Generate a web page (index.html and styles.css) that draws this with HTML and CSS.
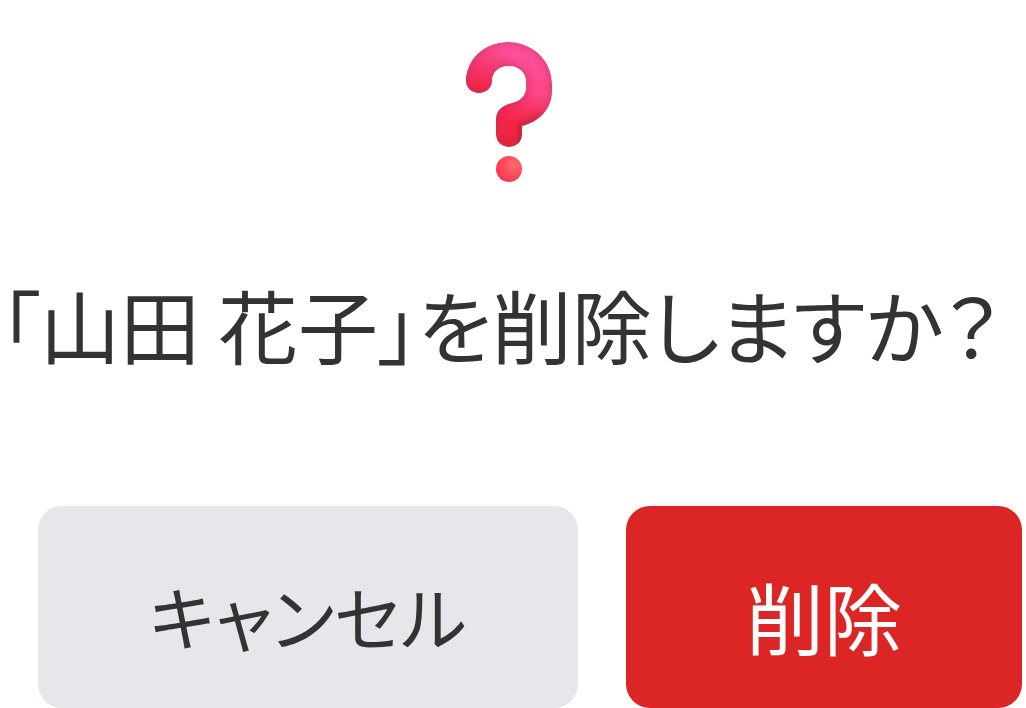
FILE: index.html
```html
<!DOCTYPE html>
<html lang="ja">
<head>
  <meta charset="UTF-8" />
  <meta name="viewport" content="width=device-width, initial-scale=1.0" />
  <title>削除の確認</title>
  <link rel="stylesheet" href="styles.css">
</head>
<body>
  <main class="dialog">
    <svg class="icon" viewBox="0 0 88 144" aria-hidden="true">
      <defs>
        <linearGradient id="base" gradientUnits="userSpaceOnUse" x1="66" y1="14" x2="42" y2="100">
          <stop offset="0" stop-color="#fd509a" />
          <stop offset="0.4" stop-color="#fb4684" />
          <stop offset="0.8" stop-color="#f6213f" />
          <stop offset="1" stop-color="#ea253a" />
        </linearGradient>
        <radialGradient id="leftRed" gradientUnits="userSpaceOnUse" cx="10" cy="56" r="56">
          <stop offset="0" stop-color="#f2203a" />
          <stop offset="0.4" stop-color="#f0264a" stop-opacity="0.7" />
          <stop offset="1" stop-color="#ee2c58" stop-opacity="0" />
        </radialGradient>
        <radialGradient id="dot" cx="0.68" cy="0.35" r="0.7">
          <stop offset="0" stop-color="#ff6a6c" />
          <stop offset="1" stop-color="#fd3550" />
        </radialGradient>
        <filter id="soft" x="-20%" y="-20%" width="140%" height="140%">
          <feGaussianBlur stdDeviation="3" />
        </filter>
        <clipPath id="hook">
          <path id="mark" d="M1 40C1 18 20 1 43 1C67 1 87 19 87 43V51C87 68 74 81 57 85V93C57 101 51 106 44 106C37 106 31 101 31 93V78C31 69 38 64 47 62C55 60 61 55 61 46V41C61 31 53 25 44 25C34 25 27 31 27 40C27 47 21 52 14 52C7 52 1 47 1 40Z" />
        </clipPath>
      </defs>
      <g clip-path="url(#hook)">
        <use href="#mark" fill="url(#base)" />
        <use href="#mark" fill="url(#leftRed)" />
        <use href="#mark" fill="none" stroke="#bd2d59" stroke-width="4" stroke-opacity="0.6" filter="url(#soft)" />
        <path d="M56 108V87C64 85 70 81 75 76" fill="none" stroke="#b6232f" stroke-width="9" stroke-opacity="0.6" filter="url(#soft)" />
      </g>
      <circle cx="44" cy="128" r="13" fill="url(#dot)" />
    </svg>

    <h1 class="message">「山田 花子」を削除しますか？</h1>

    <div class="actions">
      <button type="button" class="btn btn-cancel">キャンセル</button>
      <button type="button" class="btn btn-delete">削除</button>
    </div>
  </main>
</body>
</html>
```
FILE: styles.css
```css
body {
  margin: 0;
  background: white;
  color: #333;
  font-family: "Noto Sans CJK JP", sans-serif;
  font-feature-settings: "palt";
}

.dialog {
  display: flex;
  flex-direction: column;
  padding: 41px 4px 0 0;
}

.icon {
  align-self: center;
  width: 88px;
  height: 144px;
  margin-right: 4px;
}

.message {
  margin: 76px 0 121px;
  font-size: 80px;
  font-weight: 400;
  line-height: 124px;
  white-space: nowrap;
}

.actions {
  display: flex;
  gap: 48px;
  padding-left: 38px;
}

.btn {
  box-sizing: border-box;
  padding: 52px 0 34px;
  border: none;
  border-radius: 24px;
  font: inherit;
  font-feature-settings: inherit;
  font-size: 78px;
  line-height: 116px;
  cursor: pointer;
}

.btn-cancel {
  flex: 15 1 0;
  background-color: #e5e7eb;
  color: #333;
  font-size: 70px;
}

.btn-delete {
  flex: 11 1 0;
  background-color: #dc2626;
  color: white;
}
```
